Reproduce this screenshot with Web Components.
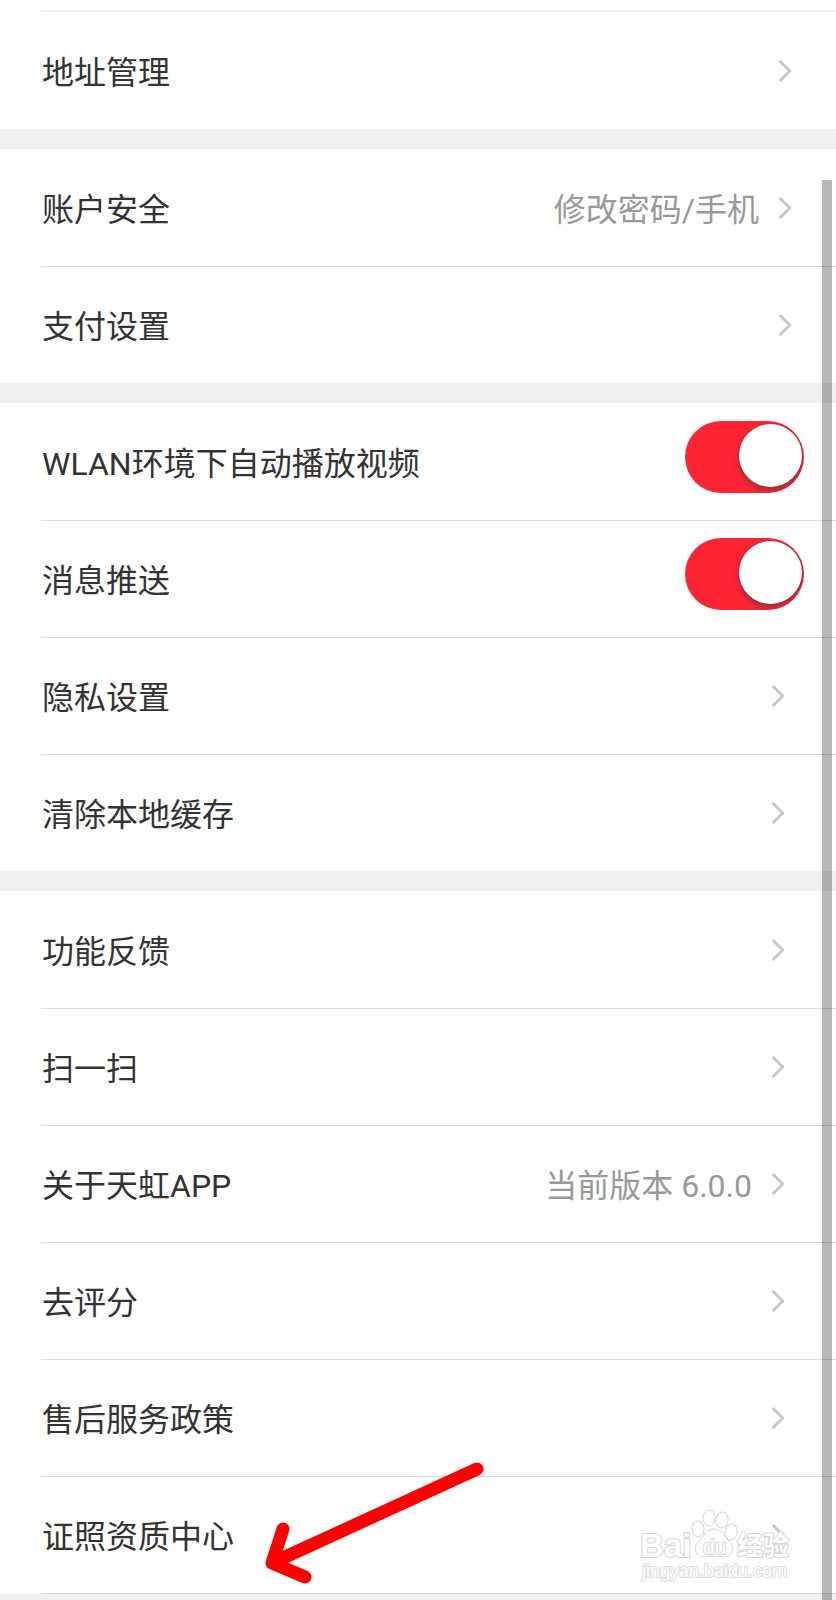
<!DOCTYPE html>
<html lang="zh-CN">
<head>
<meta charset="UTF-8">
<meta name="viewport" content="width=device-width, initial-scale=1.0">
<title>设置</title>
<style>
  body {
    margin: 0;
    background: #f0f0f0;
    color: #333;
    font-family: Roboto, "Noto Sans CJK SC", sans-serif;
    font-size: 32px;
    line-height: 40px;
  }
</style>
</head>
<body>
<settings-page>
  <settings-group continued>
    <setting-link href="#address">地址管理</setting-link>
  </settings-group>
  <settings-group>
    <setting-link href="#security">账户安全<span slot="value">修改密码/手机</span></setting-link>
    <setting-link href="#payment">支付设置</setting-link>
  </settings-group>
  <settings-group>
    <setting-switch checked>WLAN环境下自动播放视频</setting-switch>
    <setting-switch checked>消息推送</setting-switch>
    <setting-link inset href="#privacy">隐私设置</setting-link>
    <setting-link inset href="#cache">清除本地缓存</setting-link>
  </settings-group>
  <settings-group last>
    <setting-link inset href="#feedback">功能反馈</setting-link>
    <setting-link inset href="#scan">扫一扫</setting-link>
    <setting-link inset href="#about">关于天虹APP<span slot="value">当前版本 6.0.0</span></setting-link>
    <setting-link inset href="#rate">去评分</setting-link>
    <setting-link inset href="#policy">售后服务政策</setting-link>
    <setting-link inset href="#license">证照资质中心</setting-link>
    <pointer-arrow slot="overlay"></pointer-arrow>
    <site-watermark slot="overlay"></site-watermark>
  </settings-group>
  <scroll-thumb slot="overlay"></scroll-thumb>
</settings-page>

<script>
class SettingsPage extends HTMLElement {
  constructor() {
    super();
    this.attachShadow({ mode: 'open' });
    this.shadowRoot.innerHTML = `
      <style>
        :host { display: block; position: relative; }
        main { display: flex; flex-direction: column; gap: 20px; padding-bottom: 6px; }
      </style>
      <main><slot></slot></main>
      <slot name="overlay"></slot>`;
  }
}
customElements.define('settings-page', SettingsPage);


class SettingsGroup extends HTMLElement {
  constructor() {
    super();
    this.attachShadow({ mode: 'open' });
    this.shadowRoot.innerHTML = `
      <style>
        :host { display: block; position: relative; background: #fff; }
        section { display: flex; flex-direction: column; }
        /* line between two rows, starting at the text */
        ::slotted(*) {
          background: linear-gradient(#dcdcdc, #dcdcdc) 41px 0 / 100% 1px no-repeat;
        }
        ::slotted(:first-child) { background: none; }
        :host([continued]) { padding-top: 10px; }
        :host([continued]) section { margin-left: 41px; border-top: 2px solid #efefef; }
        :host([continued]) ::slotted(*) { margin-left: -41px; }
        :host([last])::after {
          content: "";
          display: block;
          height: 1px;
          margin-left: 41px;
          background: #d8d8d8;
        }
        slot[name="overlay"]::slotted(*) { background: none; }
      </style>
      <section><slot></slot></section>
      <slot name="overlay"></slot>`;
  }
}
customElements.define('settings-group', SettingsGroup);


class SettingLink extends HTMLElement {
  constructor() {
    super();
    this.attachShadow({ mode: 'open' });
    this.shadowRoot.innerHTML = `
      <style>
        :host { display: block; }
        a {
          display: flex;
          align-items: center;
          gap: 19px;
          min-height: 117px;
          box-sizing: border-box;
          padding: 0 44px 0 42px;
          color: inherit;
          text-decoration: none;
        }
        :host([inset]) a { padding-right: 51px; }
        .label { flex: 1; padding-top: 4px; }
        .value { color: #999; padding-top: 4px; }
        svg { display: block; flex: none; }
      </style>
      <a>
        <span class="label"><slot></slot></span>
        <span class="value"><slot name="value"></slot></span>
        <svg width="14" height="24" viewBox="0 0 14 24" fill="none" stroke="#c8c8c8"
             stroke-width="3" stroke-linecap="round" stroke-linejoin="round" aria-hidden="true">
          <path d="M2.5 2.8 11.8 12 2.5 21.2"/>
        </svg>
      </a>`;
  }
  connectedCallback() {
    this.shadowRoot.querySelector('a').href = this.getAttribute('href') || '#';
  }
}
customElements.define('setting-link', SettingLink);


class SettingSwitch extends HTMLElement {
  constructor() {
    super();
    this.attachShadow({ mode: 'open' });
    this.shadowRoot.innerHTML = `
      <style>
        :host { display: block; }
        div {
          display: flex;
          align-items: center;
          min-height: 117px;
          box-sizing: border-box;
          padding: 0 32px 0 42px;
        }
        label { flex: 1; padding-top: 4px; }
        input {
          appearance: none;
          display: flex;
          align-items: flex-start;
          flex: none;
          width: 119px;
          height: 72px;
          margin: 0 0 10px;
          padding: 3px 2px;
          box-sizing: border-box;
          border-radius: 36px;
          background: #ddd;
          overflow: hidden;
        }
        input::before {
          content: "";
          width: 63px;
          height: 63px;
          border-radius: 50%;
          background: #fff;
          box-shadow: 0 4px 7px rgba(60,60,60,0.5), 0 0 2px rgba(60,60,60,0.5);
        }
        input:checked { background: #ff2434; justify-content: flex-end; }
      </style>
      <div>
        <label for="toggle"><slot></slot></label>
        <input type="checkbox" role="switch" id="toggle">
      </div>`;
  }
  connectedCallback() {
    this.shadowRoot.querySelector('input').checked = this.hasAttribute('checked');
  }
}
customElements.define('setting-switch', SettingSwitch);


class PointerArrow extends HTMLElement {
  constructor() {
    super();
    this.attachShadow({ mode: 'open' });
    this.shadowRoot.innerHTML = `
      <style>
        :host { display: block; position: absolute; left: 260px; bottom: 4px; pointer-events: none; }
        svg { display: block; }
      </style>
      <svg width="230" height="130" viewBox="0 0 230 130" fill="none" stroke="#fe0000"
           stroke-width="13" stroke-linecap="round" stroke-linejoin="round" aria-hidden="true">
        <path d="M217 9 12 103M23 69 12 103 45 117"/>
      </svg>`;
  }
}
customElements.define('pointer-arrow', PointerArrow);


class SiteWatermark extends HTMLElement {
  constructor() {
    super();
    this.attachShadow({ mode: 'open' });
    this.shadowRoot.innerHTML = `
      <style>
        :host { display: block; position: absolute; right: 42px; bottom: 9px; pointer-events: none; }
        svg { display: block; }
        text { font-family: "Liberation Sans", "Noto Sans CJK SC", sans-serif; paint-order: stroke; }
      </style>
      <svg width="156" height="78" viewBox="0 0 156 78" fill="#fff" stroke="#d6d6d6"
           stroke-width="2" stroke-linejoin="round">
        <text x="2" y="50" font-size="33" font-weight="700">Bai</text>
        <g stroke-width="1">
          <ellipse cx="60" cy="22" rx="6" ry="8" transform="rotate(-8 60 22)"/>
          <ellipse cx="71" cy="11" rx="6" ry="8"/>
          <ellipse cx="84" cy="13" rx="6" ry="8" transform="rotate(8 84 13)"/>
          <ellipse cx="93" cy="25" rx="6" ry="8" transform="rotate(10 93 25)"/>
          <path d="M76 22c-7 0-9 6-14 11-5 5-6 9-3 14 4 5 10 2 17 2s13 3 17-2c3-5 2-9-3-14-5-5-7-11-14-11z"/>
        </g>
        <text x="65" y="47" font-size="21">du</text>
        <text x="99" y="48" font-size="26" font-weight="700">经验</text>
        <text x="4" y="70" font-size="18" stroke="#dedede">jingyan.baidu.com</text>
      </svg>`;
  }
}
customElements.define('site-watermark', SiteWatermark);


class ScrollThumb extends HTMLElement {
  constructor() {
    super();
    this.attachShadow({ mode: 'open' });
    this.shadowRoot.innerHTML = `
      <style>
        :host {
          display: block;
          position: absolute;
          top: 180px;
          right: 4px;
          bottom: 0;
          width: 10px;
          background: rgba(0,0,0,0.28);
          pointer-events: none;
        }
      </style>`;
  }
}
customElements.define('scroll-thumb', ScrollThumb);
</script>
</body>
</html>
